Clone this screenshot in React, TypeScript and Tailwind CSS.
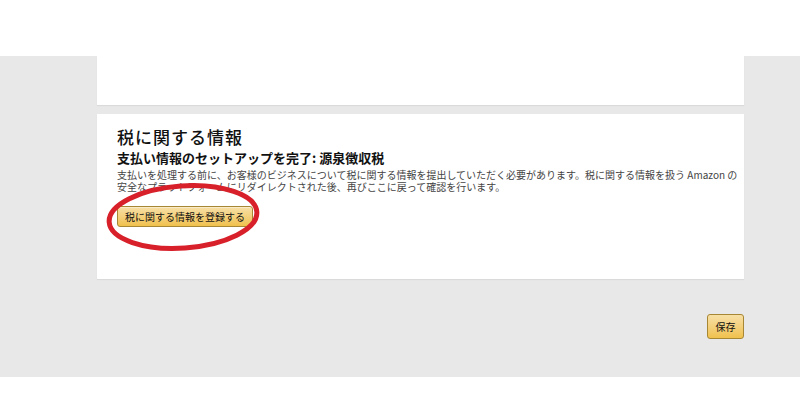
export default function App() {
  const font = { fontFamily: '"Noto Sans CJK JP", "Liberation Sans", sans-serif' };

  return (
    <div className="w-[800px] h-[419px] bg-white overflow-hidden" style={font}>
      <div className="h-[56px] bg-white" />
      <div className="h-[321px] bg-[#e8e8e8] flex flex-col">
        <div className="ml-[97px] w-[647px] h-[49px] bg-white shadow-[0_1px_1px_rgba(0,0,0,0.06)]" />
        <div className="relative ml-[97px] mt-[9px] w-[647px] h-[165px] bg-white shadow-[0_1px_1px_rgba(0,0,0,0.06)] pl-[20px] pt-[11px]">
          <h2 className="text-[17px] leading-[24px] tracking-[1px] text-[#111] font-medium">税に関する情報</h2>
          <h3 className="text-[13px] leading-[18px] text-[#111] font-bold">
            支払い情報のセットアップを完了: 源泉徴収税
          </h3>
          <p className="mt-[2px] text-[10px] leading-[12px] text-[#444]">
            支払いを処理する前に、お客様のビジネスについて税に関する情報を提出していただく必要があります。税に関する情報を扱う Amazon の
            <br />
            安全なプラットフォームにリダイレクトされた後、再びここに戻って確認を行います。
          </p>
          <button className="mt-[13px] h-[21px] px-[7px] text-[10px] text-[#111] rounded-[3px] border border-[#a88734] bg-gradient-to-b from-[#f7dfa5] to-[#f0c14b] shadow-[inset_0_1px_0_rgba(255,255,255,0.4)]">
            税に関する情報を登録する
          </button>
          <svg
            className="absolute left-0 top-0 pointer-events-none"
            width="647"
            height="165"
            viewBox="0 0 647 165"
          >
            <ellipse
              cx="86"
              cy="103"
              rx="74"
              ry="31"
              fill="none"
              stroke="#d8202a"
              strokeWidth="5"
              transform="rotate(-4 86 103)"
            />
          </svg>
        </div>
        <div className="w-[744px] flex justify-end mt-[35px]">
          <button className="w-[37px] h-[25px] text-[10px] text-[#111] rounded-[3px] border border-[#a88734] bg-gradient-to-b from-[#f7dfa5] to-[#f0c14b]">
            保存
          </button>
        </div>
      </div>
      <div className="h-[42px] bg-white" />
    </div>
  );
}
